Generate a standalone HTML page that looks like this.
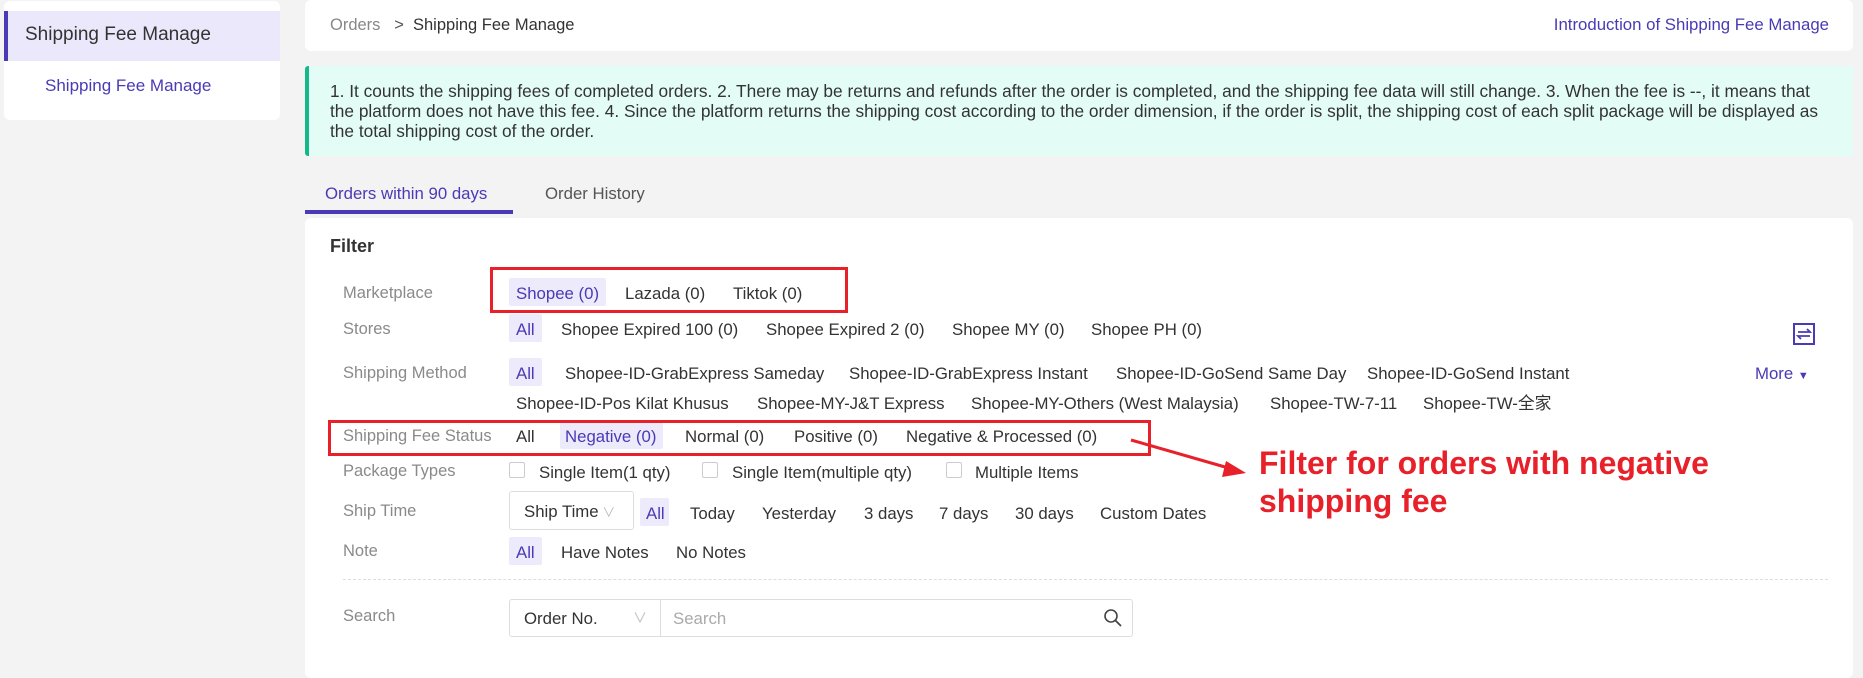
<!DOCTYPE html>
<html><head><meta charset="utf-8"><style>
*{box-sizing:border-box;margin:0;padding:0}
body{width:1863px;height:662px;background:#f3f3f3;font-family:"Liberation Sans","Noto Sans CJK SC",sans-serif;font-size:16.8px;color:#333;position:relative;overflow:hidden}
.a{position:absolute;white-space:nowrap;line-height:20px}
.card{position:absolute;background:#fff;border-radius:6px}
.lbl{position:absolute;color:#8a8a8a;white-space:nowrap;left:343px;line-height:20px;font-size:16.5px}
.hl{position:absolute;background:#edeafc;border-radius:2px}
.p{color:#4a3ab5}
.cb{position:absolute;width:16px;height:16px;border:1px solid #ccc;border-radius:2px;background:#fff}
.red{position:absolute;border:3px solid #e8202a}
</style></head><body>
<div class="card" style="left:4px;top:1px;width:276px;height:119px"></div>
<div class="a" style="left:4px;top:11px;width:276px;height:50px;background:#ebe8fb;border-left:4px solid #4a3ab5"></div>
<div class="a" style="left:25px;top:25px;font-size:19px;color:#333">Shipping Fee Manage</div>
<div class="a p" style="left:45px;top:76px;font-size:17px">Shipping Fee Manage</div>

<div class="card" style="left:305px;top:0;width:1548px;height:51px"></div>
<div class="a" style="left:330px;top:15px;color:#888;font-size:16.5px">Orders&nbsp;&nbsp; <span style="color:#555">&gt;</span>&nbsp; <span style="color:#333">Shipping Fee Manage</span></div>
<div class="a p" style="right:34px;top:15px;font-size:16.8px">Introduction of Shipping Fee Manage</div>

<div class="a" style="left:305px;top:66px;width:1548px;height:90px;background:#e3fdf6;border-left:4px solid #13b98a;border-radius:3px"></div>
<div class="a" style="left:330px;top:81px;width:1500px;white-space:normal;line-height:20px;font-size:17.3px;color:#333">1. It counts the shipping fees of completed orders. 2. There may be returns and refunds after the order is completed, and the shipping fee data will still change. 3. When the fee is --, it means that the platform does not have this fee. 4. Since the platform returns the shipping cost according to the order dimension, if the order is split, the shipping cost of each split package will be displayed as the total shipping cost of the order.</div>

<div class="a p" style="left:325px;top:184px;font-size:16.8px">Orders within 90 days</div>
<div class="a" style="left:545px;top:184px;color:#555">Order History</div>
<div class="a" style="left:305px;top:210px;width:208px;height:4px;background:#4a3ab5"></div>

<div class="card" style="left:305px;top:218px;width:1548px;height:460px"></div>
<div class="a" style="left:330px;top:236px;font-size:18px;font-weight:bold;color:#333">Filter</div>

<div class="lbl" style="top:283px">Marketplace</div>
<div class="hl" style="left:509px;top:278px;width:97px;height:28px"></div>
<div class="a p" style="left:516px;top:284px">Shopee (0)</div>
<div class="a" style="left:625px;top:284px">Lazada (0)</div>
<div class="a" style="left:733px;top:284px">Tiktok (0)</div>
<div class="red" style="left:490px;top:267px;width:358px;height:46px"></div>

<div class="lbl" style="top:319px">Stores</div>
<div class="hl" style="left:509px;top:314px;width:33px;height:28px"></div>
<div class="a p" style="left:516px;top:320px">All</div>
<div class="a" style="left:561px;top:320px">Shopee Expired 100 (0)</div>
<div class="a" style="left:766px;top:320px">Shopee Expired 2 (0)</div>
<div class="a" style="left:952px;top:320px">Shopee MY (0)</div>
<div class="a" style="left:1091px;top:320px">Shopee PH (0)</div>
<svg class="a" style="left:1793px;top:323px" width="22" height="22" viewBox="0 0 22 22"><rect x="1" y="1" width="20" height="20" fill="none" stroke="#4a3ab5" stroke-width="2"/><path d="M5 9h12l-3-3M17 13H5l3 3" fill="none" stroke="#4a3ab5" stroke-width="1.8"/></svg>

<div class="lbl" style="top:363px">Shipping Method</div>
<div class="hl" style="left:509px;top:358px;width:33px;height:28px"></div>
<div class="a p" style="left:516px;top:364px">All</div>
<div class="a" style="left:565px;top:364px">Shopee-ID-GrabExpress Sameday</div>
<div class="a" style="left:849px;top:364px">Shopee-ID-GrabExpress Instant</div>
<div class="a" style="left:1116px;top:364px">Shopee-ID-GoSend Same Day</div>
<div class="a" style="left:1367px;top:364px">Shopee-ID-GoSend Instant</div>
<div class="a p" style="left:1755px;top:364px">More <span style="font-size:11px">&#9660;</span></div>
<div class="a" style="left:516px;top:394px">Shopee-ID-Pos Kilat Khusus</div>
<div class="a" style="left:757px;top:394px">Shopee-MY-J&amp;T Express</div>
<div class="a" style="left:971px;top:394px">Shopee-MY-Others (West Malaysia)</div>
<div class="a" style="left:1270px;top:394px">Shopee-TW-7-11</div>
<div class="a" style="left:1423px;top:394px">Shopee-TW-全家</div>

<div class="lbl" style="top:426px">Shipping Fee Status</div>
<div class="a" style="left:516px;top:427px">All</div>
<div class="hl" style="left:560px;top:421px;width:103px;height:28px"></div>
<div class="a p" style="left:565px;top:427px">Negative (0)</div>
<div class="a" style="left:685px;top:427px">Normal (0)</div>
<div class="a" style="left:794px;top:427px">Positive (0)</div>
<div class="a" style="left:906px;top:427px">Negative &amp; Processed (0)</div>
<div class="red" style="left:328px;top:420px;width:823px;height:36px"></div>

<div class="lbl" style="top:461px">Package Types</div>
<div class="cb" style="left:509px;top:462px"></div>
<div class="a" style="left:539px;top:463px">Single Item(1 qty)</div>
<div class="cb" style="left:702px;top:462px"></div>
<div class="a" style="left:732px;top:463px">Single Item(multiple qty)</div>
<div class="cb" style="left:946px;top:462px"></div>
<div class="a" style="left:975px;top:463px">Multiple Items</div>

<div class="lbl" style="top:501px">Ship Time</div>
<div class="a" style="left:509px;top:491px;width:125px;height:39px;border:1px solid #ddd;border-radius:3px"></div>
<div class="a" style="left:524px;top:502px">Ship Time<span style="color:#bbb;font-size:13px"> ∨</span></div>
<div class="hl" style="left:640px;top:498px;width:29px;height:28px"></div>
<div class="a p" style="left:646px;top:504px">All</div>
<div class="a" style="left:690px;top:504px">Today</div>
<div class="a" style="left:762px;top:504px">Yesterday</div>
<div class="a" style="left:864px;top:504px">3 days</div>
<div class="a" style="left:939px;top:504px">7 days</div>
<div class="a" style="left:1015px;top:504px">30 days</div>
<div class="a" style="left:1100px;top:504px">Custom Dates</div>

<div class="lbl" style="top:541px">Note</div>
<div class="hl" style="left:509px;top:537px;width:33px;height:28px"></div>
<div class="a p" style="left:516px;top:543px">All</div>
<div class="a" style="left:561px;top:543px">Have Notes</div>
<div class="a" style="left:676px;top:543px">No Notes</div>

<div class="a" style="left:343px;top:579px;width:1485px;border-top:1px dashed #ddd"></div>

<div class="lbl" style="top:606px">Search</div>
<div class="a" style="left:509px;top:599px;width:624px;height:38px;border:1px solid #ddd;border-radius:3px"></div>
<div class="a" style="left:660px;top:600px;width:1px;height:36px;background:#ddd"></div>
<div class="a" style="left:524px;top:609px">Order No.</div>
<div class="a" style="left:633px;top:608px;color:#bbb;font-size:14px">∨</div>
<div class="a" style="left:673px;top:609px;color:#aaa">Search</div>
<svg class="a" style="left:1103px;top:608px" width="20" height="20" viewBox="0 0 20 20"><circle cx="8" cy="8" r="6" fill="none" stroke="#444" stroke-width="1.6"/><path d="M12.5 12.5L18 18" stroke="#444" stroke-width="1.8"/></svg>

<svg class="a" style="left:0;top:0" width="1863" height="662"><path d="M1131 440L1232 469" stroke="#e8202a" stroke-width="3"/><path d="M1246 473L1226 461L1222 477Z" fill="#e8202a"/></svg>
<div class="a" style="left:1259px;top:444px;font-size:32px;font-weight:bold;color:#e8202a;line-height:38px">Filter for orders with negative<br>shipping fee</div>
</body></html>
